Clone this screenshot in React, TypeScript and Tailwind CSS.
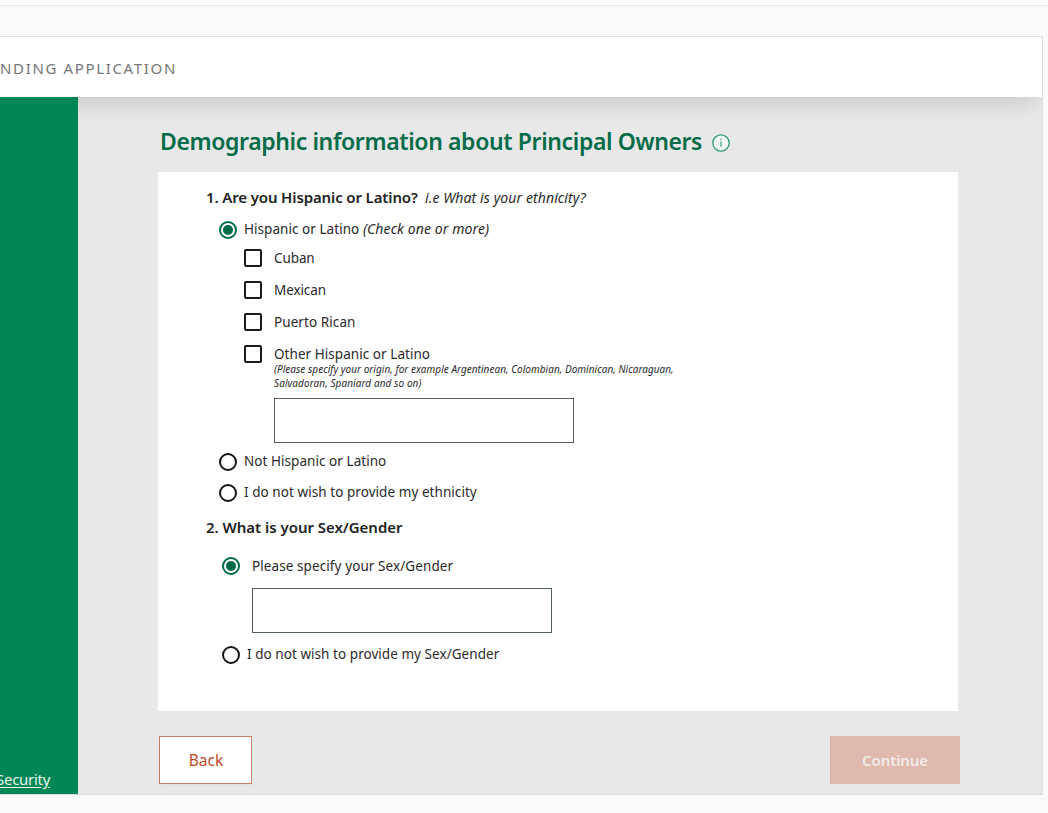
import type { ReactNode } from "react";

function Radio({ checked = false }: { checked?: boolean }) {
  return (
    <span
      role="radio"
      aria-checked={checked}
      className={
        checked
          ? "flex size-[18px] shrink-0 items-center justify-center rounded-full border-2 border-[#006c47]"
          : "size-[18px] shrink-0 rounded-full border-2 border-[#151515]"
      }
    >
      {checked && <span className="size-2.5 shrink-0 rounded-full bg-[#006c47]" />}
    </span>
  );
}

function RadioRow({ checked, className, children }: { checked?: boolean; className: string; children: ReactNode }) {
  return (
    <div className={`flex h-[18px] items-start whitespace-pre text-[13.5px] ${className}`}>
      <Radio checked={checked} />
      <span>{children}</span>
    </div>
  );
}

function CheckboxRow({ label, className }: { label: string; className: string }) {
  return (
    <div className="flex h-[18px] items-start gap-3 text-[13.5px] leading-[18px]">
      <span role="checkbox" aria-checked={false} className="size-[18px] shrink-0 rounded-[2px] border-2 border-[#1b1b1b]" />
      <span className={`whitespace-nowrap ${className}`}>{label}</span>
    </div>
  );
}

function InfoIcon() {
  return (
    <svg viewBox="0 0 18 18" className="mt-px size-[18px] shrink-0" fill="none">
      <circle cx="9" cy="9" r="8.2" fill="#f1f5f3" stroke="#2b9a70" strokeWidth="1.3" />
      <path d="M9 7.3V12.7" stroke="#55ab8a" strokeWidth="1.4" />
      <path d="M9 4.7V6.1" stroke="#55ab8a" strokeWidth="1.4" />
    </svg>
  );
}

export default function App() {
  return (
    <div className="flex h-[813px] w-[1048px] flex-col overflow-hidden bg-[#fafafa] font-['Noto_Sans',sans-serif] text-[#2a2a2a]">
      <div className="h-1.5 shrink-0 border-b border-[#e5e5e5] bg-white" />
      <div className="mt-[30px] flex h-[759px] w-[1043px] shrink-0 flex-col overflow-hidden border-y border-r border-[#dedede] bg-[#e8e8e8]">
        <header className="relative z-10 flex h-[60px] shrink-0 items-center bg-white shadow-[0_12px_24px_-8px_rgba(0,0,0,0.17)]">
          <span className="whitespace-nowrap pt-0.5 text-[15px] leading-5 tracking-[1.65px] text-[#767676]">
            NDING APPLICATION
          </span>
        </header>

        <div className="flex min-h-0 flex-1">
          <aside className="relative z-20 flex w-[78px] shrink-0 flex-col justify-end overflow-hidden bg-[#008755] pb-[5px]">
            <a className="-ml-1 whitespace-nowrap text-[15px] leading-5 tracking-[-0.28px] text-[#e6f5ee] underline underline-offset-2">
              Security
            </a>
          </aside>

          <main className="relative z-20 flex flex-1 flex-col pl-20 pt-[29px]">
            <div className="flex h-[30px] items-center gap-[10px] pl-0.5">
              <h1 className="w-[542px] whitespace-nowrap text-[23px] leading-[30px] font-semibold tracking-[-0.38px] text-[#006c47]">
                Demographic information about Principal Owners
              </h1>
              <div className="pt-0.5">
                <InfoIcon />
              </div>
            </div>

            <section className="mt-4 flex h-[539px] w-[800px] shrink-0 flex-col bg-white pl-12 pt-[15px]">
              <div className="flex h-5 items-baseline whitespace-nowrap leading-5">
                <h2 className="w-[219px] text-[15px] font-semibold tracking-[-0.13px] text-[#222]">
                  1. Are you Hispanic or Latino?
                </h2>
                <em className="text-[14px] tracking-[0.1px]">i.e What is your ethnicity?</em>
              </div>

              <RadioRow checked className="mt-3.5 gap-[7px] pl-[13px] leading-4 tracking-[0.05px]">
                Hispanic or Latino <em className="text-[14px] tracking-[0.1px]">(Check one or more)</em>
              </RadioRow>

              <div className="mt-2.5 flex flex-col gap-3.5 pl-[38px]">
                <CheckboxRow label="Cuban" className="tracking-[-0.1px]" />
                <CheckboxRow label="Mexican" className="tracking-[-0.1px]" />
                <CheckboxRow label="Puerto Rican" className="tracking-[0.08px]" />
                <CheckboxRow label="Other Hispanic or Latino" className="tracking-[0.05px]" />
              </div>

              <div className="-mt-px flex flex-col whitespace-nowrap pl-[68px]">
                <em className="text-[10px] leading-[14px] tracking-[0.03px]">
                  (Please specify your origin, for example Argentinean, Colombian, Dominican, Nicaraguan,
                </em>
                <em className="text-[10px] leading-[14px] tracking-[0.08px]">Salvadoran, Spaniard and so on)</em>
                <input className="mt-2 h-[45px] w-[300px] border border-[#536066] bg-white px-3" />
              </div>

              <RadioRow className="mt-2.5 gap-[7px] pl-[13px] leading-4 tracking-[0.05px]">Not Hispanic or Latino</RadioRow>
              <RadioRow className="mt-[13px] gap-[7px] pl-[13px] leading-4 tracking-[0.06px]">
                I do not wish to provide my ethnicity
              </RadioRow>

              <h2 className="mt-[15px] h-5 text-[15px] leading-5 font-semibold tracking-[-0.03px] text-[#222]">
                2. What is your Sex/Gender
              </h2>
              <RadioRow checked className="mt-5 gap-3 pl-4 leading-[18px] tracking-[0.09px]">
                Please specify your Sex/Gender
              </RadioRow>
              <input className="ml-[46px] mt-[13px] h-[45px] w-[300px] border border-[#536066] bg-white px-3" />
              <RadioRow className="mt-[13px] gap-[7px] pl-4 leading-4 tracking-[0.05px]">
                I do not wish to provide my Sex/Gender
              </RadioRow>
            </section>

            <div className="ml-px mt-[25px] flex h-12 w-[801px] shrink-0 justify-between">
              <button className="w-[93px] border border-[#ca7a62] bg-white pl-px pt-0.5 text-[15.5px] text-[#c5492b] shadow-[0_2px_4px_rgba(0,0,0,0.03)]">
                Back
              </button>
              <button className="w-[130px] bg-[#dfb9ae] text-[15px] font-semibold tracking-[-0.08px] text-[#f1ecea]">
                Continue
              </button>
            </div>
          </main>
        </div>
      </div>
    </div>
  );
}
